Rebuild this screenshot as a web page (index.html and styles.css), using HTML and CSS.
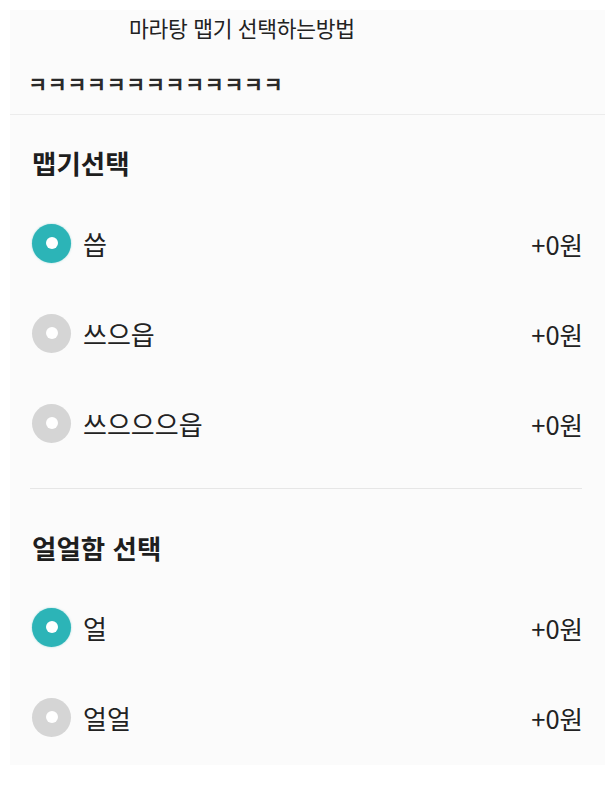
FILE: index.html
```html
<!DOCTYPE html>
<html lang="ko">
<head>
<meta charset="utf-8">
<link rel="stylesheet" href="styles.css">
</head>
<body>
<div class="panel">
  <div class="top">
    <div class="title">마라탕 맵기 선택하는방법</div>
    <div class="note">ㅋㅋㅋㅋㅋㅋㅋㅋㅋㅋㅋㅋㅋ</div>
  </div>
  <section class="group first">
    <h2 class="group-title">맵기선택</h2>
    <div class="row"><span class="radio on"></span><span class="label">씁</span><span class="price">+0원</span></div>
    <div class="row"><span class="radio"></span><span class="label">쓰으읍</span><span class="price">+0원</span></div>
    <div class="row"><span class="radio"></span><span class="label">쓰으으으읍</span><span class="price">+0원</span></div>
  </section>
  <div class="divider"></div>
  <section class="group second">
    <h2 class="group-title">얼얼함 선택</h2>
    <div class="row"><span class="radio on"></span><span class="label">얼</span><span class="price">+0원</span></div>
    <div class="row"><span class="radio"></span><span class="label">얼얼</span><span class="price">+0원</span></div>
  </section>
</div>
</body>
</html>
```

FILE: styles.css
```css
html, body {
  margin: 0;
  padding: 0;
  background: #ffffff;
}
body {
  font-family: "Noto Sans CJK KR", "Noto Sans", sans-serif;
  color: #222222;
}
.panel {
  margin: 10px 6px 0 10px;
  background: #fbfbfb;
  padding-bottom: 3px;
}
.top {
  padding-bottom: 16px;
  border-bottom: 1px solid #ececec;
}
.title {
  height: 36px;
  line-height: 36px;
  font-size: 21.5px;
  padding-left: 119px;
  letter-spacing: -0.3px;
}
.note {
  margin-top: 22px;
  height: 30px;
  line-height: 30px;
  font-size: 21px;
  font-weight: 700;
  letter-spacing: 0.3px;
  padding-left: 18px;
  color: #2a2a2a;
}
.group {
  padding: 0 22px 0 22px;
}
.group.first {
  padding-top: 28px;
}
.group.second {
  padding-top: 39px;
}
.group-title {
  margin: 0 0 15px;
  height: 40px;
  line-height: 40px;
  font-size: 26.5px;
  font-weight: 700;
  color: #1e1e1e;
}
.group.second .group-title {
  margin-bottom: 14px;
}
.row {
  height: 90px;
  display: flex;
  align-items: center;
}
.radio {
  width: 39px;
  height: 39px;
  border-radius: 50%;
  background: #d5d5d5;
  display: flex;
  align-items: center;
  justify-content: center;
  flex: none;
}
.radio::after {
  content: "";
  width: 12px;
  height: 12px;
  border-radius: 50%;
  background: #ffffff;
}
.radio.on {
  background: #2cb4b7;
  box-shadow: 0 0 2px rgba(44, 180, 183, 0.5);
}
.label {
  margin-left: 12px;
  font-size: 26px;
  flex: 1;
}
.price {
  font-size: 25.5px;
}
.divider {
  height: 1px;
  background: #e6e6e6;
  margin: 20px 23px 0 20px;
}
```
